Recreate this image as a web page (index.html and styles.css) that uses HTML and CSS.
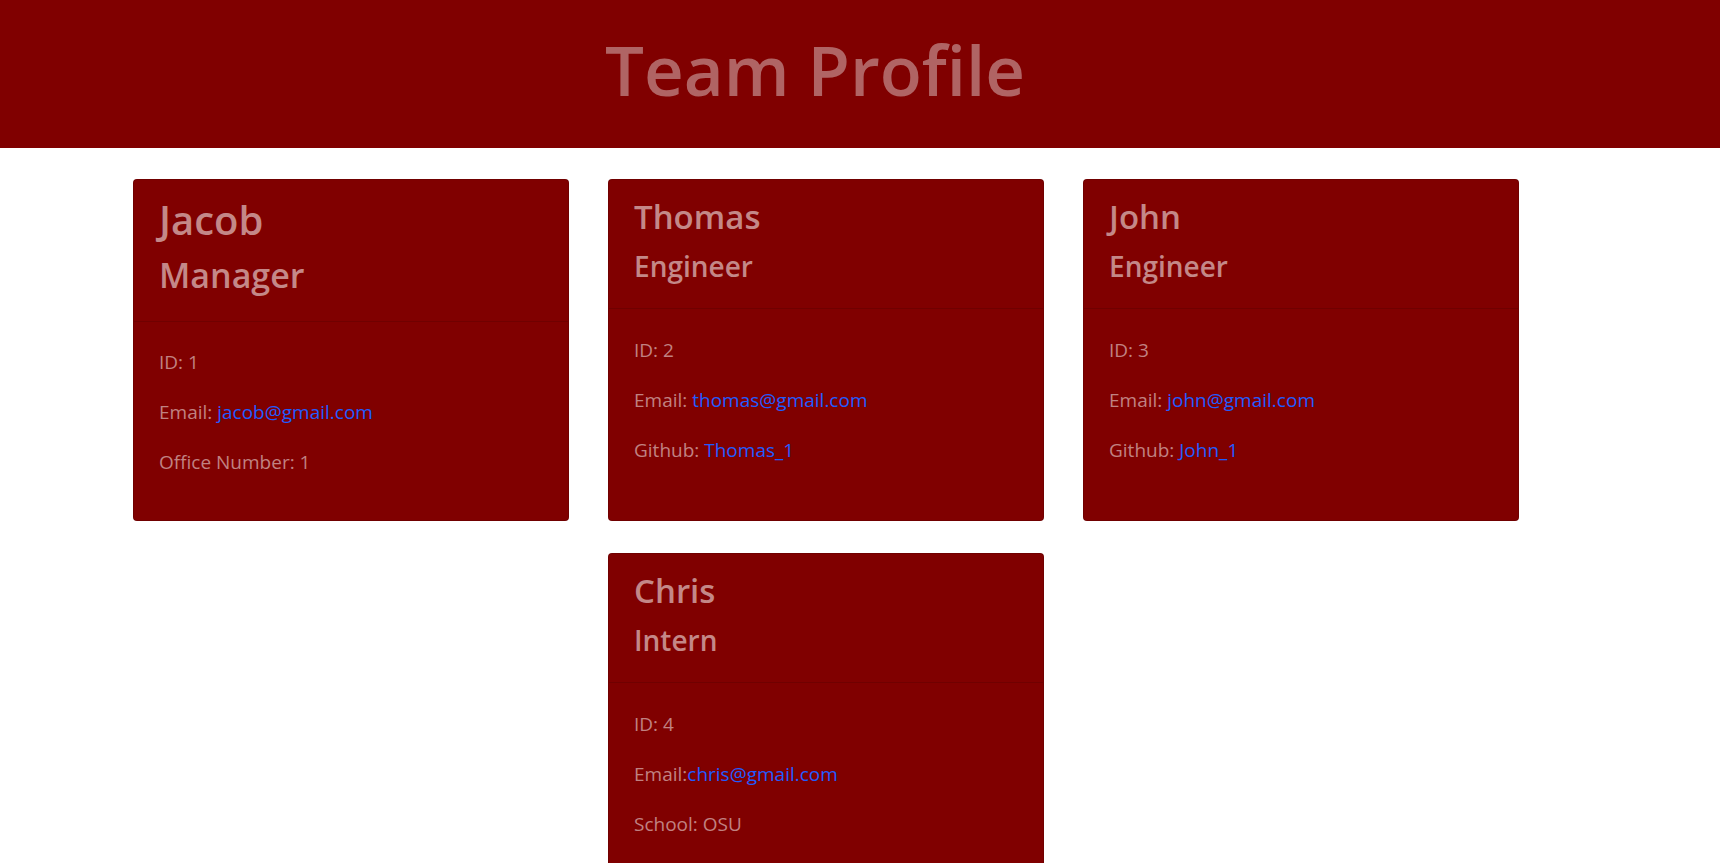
FILE: index.html
```html
<!DOCTYPE html>
<html lang="en">
<head>
<meta charset="utf-8">
<title>Team Profile</title>
<link rel="stylesheet" href="styles.css">
</head>
<body>
<header class="banner">
  <h1 class="banner-title">Team Profile</h1>
</header>
<main class="team">
  <section class="card">
    <div class="card-header card-header--manager">
      <h2 class="name name--lg">Jacob</h2>
      <h3 class="role role--lg">Manager</h3>
    </div>
    <div class="card-body card-body--manager">
      <p>ID: 1</p>
      <p>Email: <a href="#">jacob@gmail.com</a></p>
      <p>Office Number: 1</p>
    </div>
  </section>
  <section class="card">
    <div class="card-header">
      <h2 class="name">Thomas</h2>
      <h3 class="role">Engineer</h3>
    </div>
    <div class="card-body">
      <p>ID: 2</p>
      <p>Email: <a href="#">thomas@gmail.com</a></p>
      <p>Github: <a href="#">Thomas_1</a></p>
    </div>
  </section>
  <section class="card">
    <div class="card-header">
      <h2 class="name">John</h2>
      <h3 class="role">Engineer</h3>
    </div>
    <div class="card-body">
      <p>ID: 3</p>
      <p>Email: <a href="#">john@gmail.com</a></p>
      <p>Github: <a href="#">John_1</a></p>
    </div>
  </section>
  <section class="card">
    <div class="card-header">
      <h2 class="name">Chris</h2>
      <h3 class="role">Intern</h3>
    </div>
    <div class="card-body">
      <p>ID: 4</p>
      <p>Email:<a href="#">chris@gmail.com</a></p>
      <p>School: OSU</p>
    </div>
  </section>
</main>
</body>
</html>
```

FILE: styles.css
```css
* { box-sizing: border-box; }

html, body {
  margin: 0;
  padding: 0;
  background: #ffffff;
  font-family: "Open Sans", "Noto Sans", sans-serif;
}

.banner {
  height: 148px;
  background: #800000;
  padding: 35px 90px 0 0;
  text-align: center;
}

.banner-title {
  margin: 0;
  font-size: 69px;
  line-height: 69px;
  font-weight: 600;
  color: #b06464;
}

.team {
  width: 1386px;
  margin: 31px 0 0 133px;
  display: flex;
  flex-wrap: wrap;
  justify-content: center;
  column-gap: 39px;
  row-gap: 32px;
}

.card {
  width: 436px;
  height: 342px;
  background: #800000;
  border: 1px solid rgba(0, 0, 0, 0.125);
  border-radius: 4px;
  display: flex;
  flex-direction: column;
  color: #c48888;
}

.card-header {
  padding: 17px 25px 25px;
  border-bottom: 1px solid rgba(0, 0, 0, 0.125);
}

.card-header--manager {
  padding: 16px 25px 25px;
}

.name {
  margin: 0;
  font-size: 33px;
  line-height: 40px;
  font-weight: 600;
  color: #c48888;
}

.role {
  margin: 12px 0 0;
  font-size: 28px;
  line-height: 34px;
  font-weight: 600;
  color: #c48888;
}

.name--lg {
  font-size: 40px;
  line-height: 48px;
}

.role--lg {
  margin-top: 11px;
  font-size: 34px;
  line-height: 41px;
}

.card-body {
  padding: 26px 25px 0;
  font-size: 19px;
  color: #c08282;
}

.card-body--manager {
  padding: 25px 25px 0;
}

.card-body p {
  margin: 0 0 20px;
  line-height: 30px;
}

.card-body a {
  color: #1f5cff;
  text-decoration: none;
}
```
